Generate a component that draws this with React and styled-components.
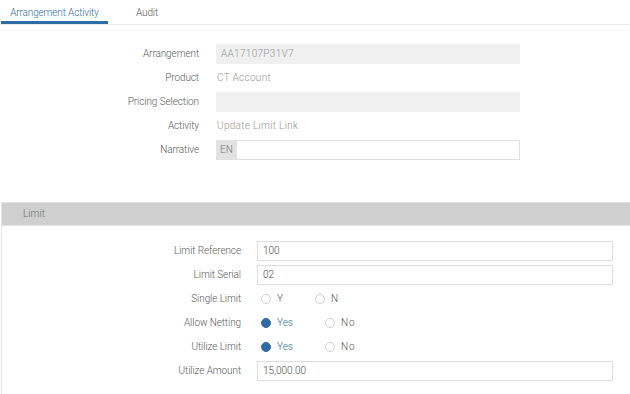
import React from "react";
import styled, { createGlobalStyle } from "styled-components";

const Global = createGlobalStyle`
  html, body { margin: 0; padding: 0; background: #fff; }
  body { font-family: Roboto, "Noto Sans", sans-serif; font-size: 10px; font-weight: 300; color: #555; }
  * { box-sizing: border-box; }
`;

const Page = styled.div`
  width: 630px;
  height: 394px;
  overflow: hidden;
`;

const Tabs = styled.div`
  display: flex;
  height: 25px;
  border-bottom: 1px solid #ececec;
  padding-left: 1px;
`;

const Tab = styled.div`
  height: 24px;
  width: ${(p) => p.$w}px;
  display: flex;
  align-items: center;
  justify-content: center;
  font-size: 10px;
  letter-spacing: -0.15px;
  color: ${(p) => (p.$active ? "#2f6ca6" : "#555")};
  border-bottom: 3px solid ${(p) => (p.$active ? "#2f6ca6" : "transparent")};
  padding-top: 3px;
`;

const TopForm = styled.div`
  display: grid;
  grid-template-columns: 199px 304px;
  column-gap: 17px;
  row-gap: 4px;
  padding-top: 19px;
  align-items: center;
`;

const BottomForm = styled.div`
  display: grid;
  grid-template-columns: 239px 356px;
  column-gap: 16px;
  row-gap: 4px;
  padding-top: 15px;
  padding-bottom: 20px;
  align-items: center;
`;

const Label = styled.div`
  text-align: right;
  color: #5a5a5a;
  font-size: 10px;
  letter-spacing: -0.1px;
  line-height: 20px;
  height: 20px;
`;

const ReadBox = styled.div`
  height: 20px;
  background: ${(p) => (p.$filled ? "#f0f0f0" : "transparent")};
  color: #959595;
  padding-left: ${(p) => (p.$filled ? "5px" : "1px")};
  line-height: 20px;
  font-size: 10px;
  letter-spacing: 0.3px;
`;

const Group = styled.div`
  display: flex;
  height: 20px;
`;

const Addon = styled.div`
  width: 21px;
  background: #e2e2e2;
  color: #777;
  line-height: 20px;
  padding-left: 4px;
  font-size: 10px;
`;

const Input = styled.div`
  flex: 1;
  height: 20px;
  border: 1px solid #dedede;
  border-left: ${(p) => (p.$noLeft ? "none" : "1px solid #dedede")};
  background: #fff;
  color: #4a4a4a;
  line-height: 18px;
  padding-left: 5px;
  font-size: 10px;
`;

const Section = styled.div`
  margin-top: 42px;
  margin-left: 1px;
  border-left: 1px solid #e6e6e6;
`;

const SectionHeader = styled.div`
  height: 24px;
  background: #cfcfcf;
  border-top: 1px solid #e2e2e2;
  border-bottom: 1px solid #e2e2e2;
  color: #707070;
  font-size: 10px;
  line-height: 22px;
  padding-left: 21px;
`;

const Radios = styled.div`
  display: flex;
  align-items: center;
  height: 20px;
  padding-left: 4px;
  line-height: 20px;
`;

const Radio = styled.div`
  display: flex;
  align-items: center;
  height: 20px;
  width: ${(p) => p.$w}px;
  gap: 6px;
  color: ${(p) => (p.$on ? "#2f6ca6" : "#555")};
  font-size: 10px;
  letter-spacing: ${(p) => (p.$spaced ? "1px" : "0")};
`;

const Dot = styled.span`
  width: 10px;
  height: 10px;
  border-radius: 50%;
  border: 1px solid ${(p) => (p.$on ? "#2f6ca6" : "#d0d0d0")};
  background: ${(p) => (p.$on ? "#2f6ca6" : "#fff")};
  flex: none;
`;

const Choice = ({ on, w, children, spaced }) => (
  <Radio $on={on} $w={w} $spaced={spaced}>
    <Dot $on={on} />
    <span>{children}</span>
  </Radio>
);

export default function App() {
  return (
    <Page>
      <Global />
      <Tabs>
        <Tab $active $w={107}>Arrangement Activity</Tab>
        <Tab $w={78}>Audit</Tab>
      </Tabs>
      <TopForm>
        <Label>Arrangement</Label>
        <ReadBox $filled>AA17107P31V7</ReadBox>
        <Label>Product</Label>
        <ReadBox>CT Account</ReadBox>
        <Label>Pricing Selection</Label>
        <ReadBox $filled />
        <Label>Activity</Label>
        <ReadBox>Update Limit Link</ReadBox>
        <Label>Narrative</Label>
        <Group>
          <Addon>EN</Addon>
          <Input $noLeft />
        </Group>
      </TopForm>
      <Section>
        <SectionHeader>Limit</SectionHeader>
        <BottomForm>
          <Label>Limit Reference</Label>
          <Input>100</Input>
          <Label>Limit Serial</Label>
          <Input>02</Input>
          <Label>Single Limit</Label>
          <Radios>
            <Choice w={54}>Y</Choice>
            <Choice w={40}>N</Choice>
          </Radios>
          <Label>Allow Netting</Label>
          <Radios>
            <Choice on w={64}>Yes</Choice>
            <Choice w={40} spaced>No</Choice>
          </Radios>
          <Label>Utilize Limit</Label>
          <Radios>
            <Choice on w={64}>Yes</Choice>
            <Choice w={40} spaced>No</Choice>
          </Radios>
          <Label>Utilize Amount</Label>
          <Input>15,000.00</Input>
        </BottomForm>
      </Section>
    </Page>
  );
}
